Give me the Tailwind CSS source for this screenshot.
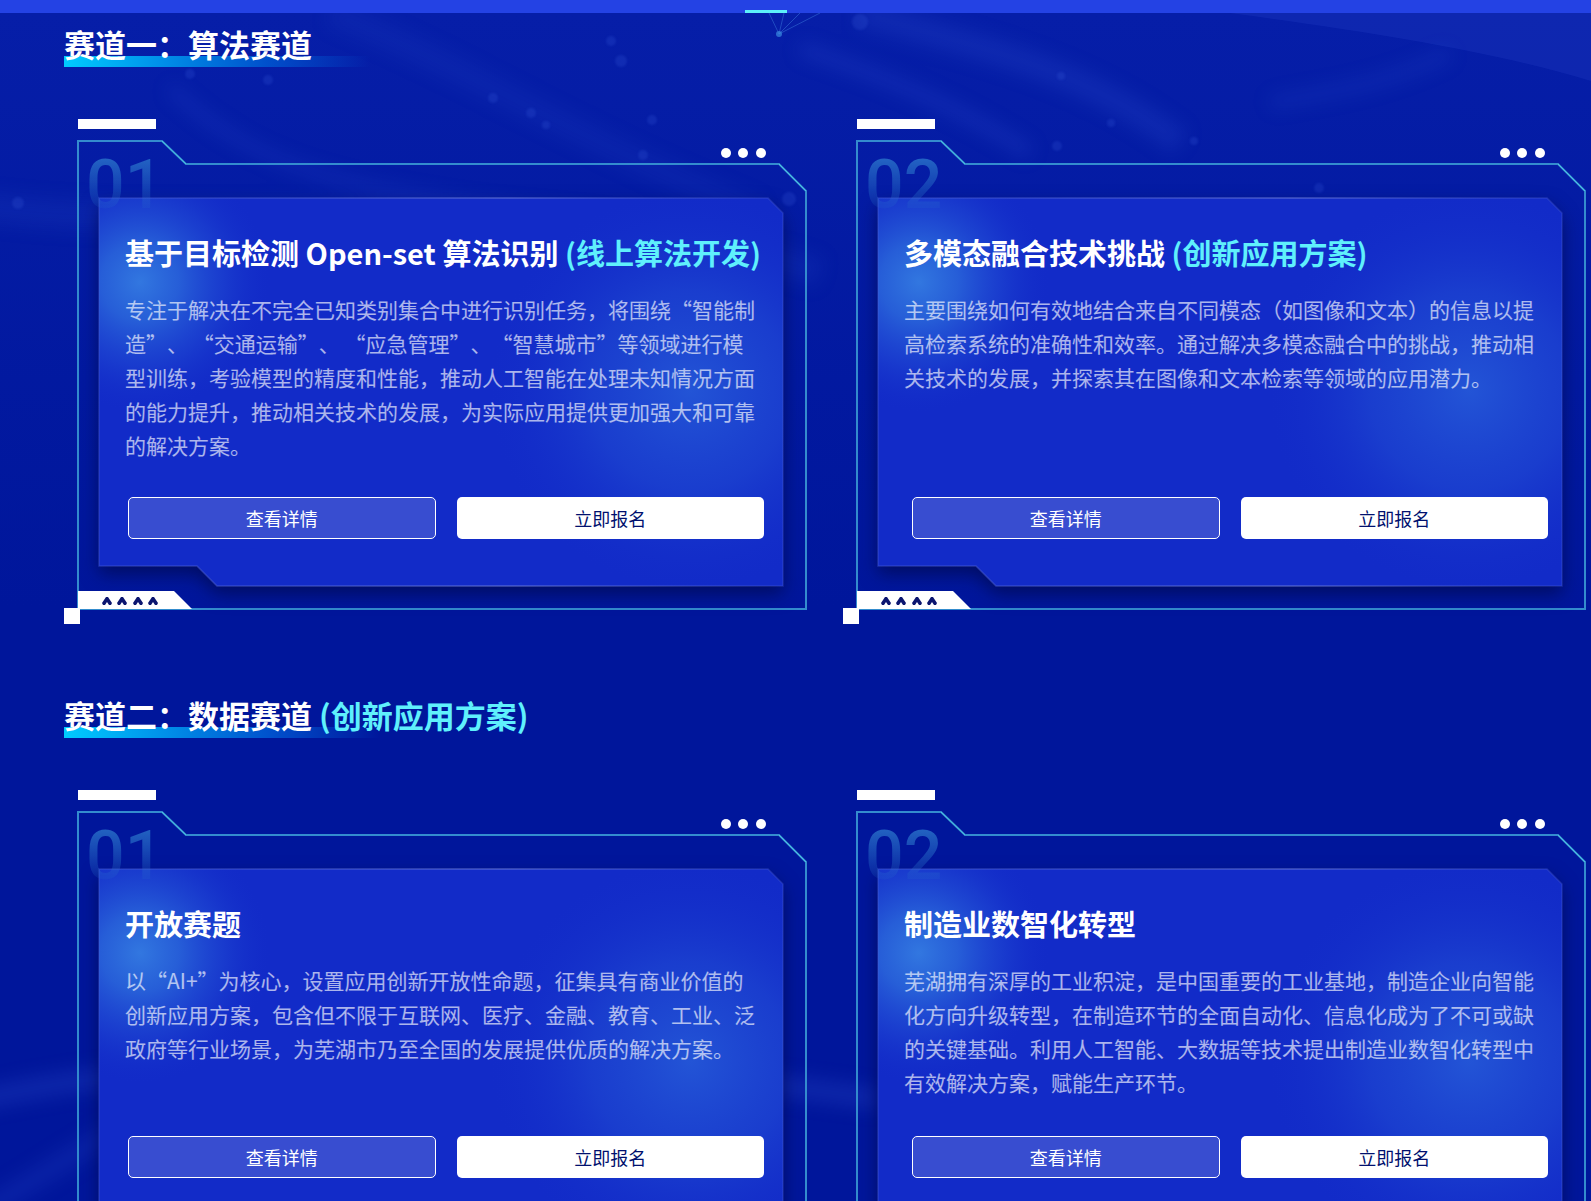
<!DOCTYPE html>
<html lang="zh-CN">
<head>
    <meta charset="UTF-8">
    <meta name="viewport" content="width=device-width, initial-scale=1.0">
    <title>赛道介绍</title>
    <script src="https://cdn.jsdelivr.net/npm/@tailwindcss/browser@4"></script>
</head>
<body class="bg-[#00169b] font-['Noto_Sans_CJK_SC',sans-serif] text-white [text-spacing-trim:space-all]">
    <!-- shared card artwork -->
    <svg class="absolute h-0 w-0" aria-hidden="true">
        <defs>
            <radialGradient id="glowLeft" gradientUnits="userSpaceOnUse" cx="76" cy="164" r="130">
                <stop offset="0" stop-color="#3a8ae6" stop-opacity=".8" />
                <stop offset=".3" stop-color="#3480e2" stop-opacity=".6" />
                <stop offset=".65" stop-color="#2a62dc" stop-opacity=".28" />
                <stop offset="1" stop-color="#1530cc" stop-opacity="0" />
            </radialGradient>
            <radialGradient id="glowRight" gradientUnits="userSpaceOnUse" cx="626" cy="272" r="200">
                <stop offset="0" stop-color="#2a66dc" stop-opacity=".7" />
                <stop offset=".5" stop-color="#2456d6" stop-opacity=".42" />
                <stop offset="1" stop-color="#1530cc" stop-opacity="0" />
            </radialGradient>
            <linearGradient id="edge" x1="0" y1="0" x2="1" y2="0">
                <stop offset="0" stop-color="#4a5fd8" stop-opacity=".4" />
                <stop offset=".6" stop-color="#7080dc" stop-opacity=".6" />
                <stop offset="1" stop-color="#5064d8" stop-opacity=".3" />
            </linearGradient>
            <filter id="panelShadow" x="-10%" y="-10%" width="120%" height="125%" color-interpolation-filters="sRGB">
                <feDropShadow dx="0" dy="8" stdDeviation="9" flood-color="#000a50" flood-opacity=".75" />
            </filter>
            <filter id="soft" x="-20%" y="-20%" width="140%" height="140%" color-interpolation-filters="sRGB"><feGaussianBlur stdDeviation="9" /></filter>
            <filter id="dotSoft" color-interpolation-filters="sRGB"><feGaussianBlur stdDeviation="1" /></filter>
            <clipPath id="panelClip"><path d="M35 80H704L719 95V468H153L133 448H35Z" /></clipPath>
        </defs>
        <symbol id="cardFrame" viewBox="0 0 742 506" preserveAspectRatio="none" overflow="visible">
            <rect x="14" y="1" width="78" height="10" fill="#fff" />
            <path d="M14 23H98L122 46H715L742 73V491H14Z" fill="none" stroke="#348cce" stroke-width="2" />
            <path d="M98 23L122 46M715 46L742 73" stroke="#4cc4e4" stroke-width="1" />
            <circle cx="662" cy="35" r="5" fill="#fff" />
            <circle cx="679" cy="35" r="5" fill="#fff" />
            <circle cx="697" cy="35" r="5" fill="#fff" />
            <path d="M35 80H704L719 95V468H153L133 448H35Z" fill="#122bc8" filter="url(#panelShadow)" />
            <g clip-path="url(#panelClip)">
                <rect x="35" y="80" width="684" height="388" fill="url(#glowLeft)" />
                <rect x="35" y="80" width="684" height="388" fill="url(#glowRight)" />
            </g>
            <path d="M35 80H704L719 95V468H153L133 448H35Z" fill="none" stroke="url(#edge)" stroke-width="1.5" />
            <path d="M14 473H110L128 491H14Z" fill="#fff" />
            <g fill="#0c1670">
                <path id="chevron" d="M38 485L42 479H44L48 485L47 487H45L43 484L41 487H39Z" />
                <use href="#chevron" x="15" />
                <use href="#chevron" x="31" />
                <use href="#chevron" x="46" />
            </g>
            <rect x="0" y="490" width="16" height="16" fill="#fff" />
        </symbol>
    </svg>

    <header class="h-[13px] bg-[#2442e4] pt-[10px]">
        <div class="ml-[46.8%] h-[3px] w-[42px] bg-[#5cf0fa]"></div>
    </header>

    <main class="relative h-[1188px] overflow-hidden bg-linear-to-b from-[#061ea8] to-[#00169b] to-50% pr-[6px] pl-16">
        <svg class="absolute inset-0 h-full w-full" viewBox="0 0 1591 1188" preserveAspectRatio="none" aria-hidden="true">
            <g fill="none" stroke="#3a60e0" filter="url(#soft)">
                <path d="M170 75C260 160 350 180 620 210" stroke-width="10" stroke-opacity=".2" />
                <path d="M330 0C480 60 560 120 760 200" stroke-width="26" stroke-opacity=".1" />
                <path d="M860 0C1000 40 1090 60 1180 130" stroke-width="26" stroke-opacity=".18" />
                <path d="M800 35C900 70 960 95 1030 140" stroke-width="14" stroke-opacity=".2" />
                <path d="M1270 90C1320 80 1380 75 1450 40" stroke-width="14" stroke-opacity=".14" />
                <path d="M-40 190C200 230 500 160 820 260" stroke-width="30" stroke-opacity=".12" />
                <path d="M-40 1090C60 1070 100 1060 200 1064" stroke-width="22" stroke-opacity=".22" />
                <path d="M-20 1200C30 1170 60 1150 110 1120" stroke-width="22" stroke-opacity=".16" />
                <path d="M760 1070L880 1086" stroke-width="22" stroke-opacity=".22" />
            </g>
            <path d="M1230 0C1380 20 1500 40 1591 68V0Z" fill="#3a54d8" fill-opacity=".18" />
            <g fill="#3a60e0" fill-opacity=".22" filter="url(#dotSoft)">
                <circle cx="860" cy="9" r="8" />
                <circle cx="611" cy="28" r="5" />
                <circle cx="621" cy="48" r="6" />
                <circle cx="493" cy="85" r="5" />
                <circle cx="531" cy="100" r="5" />
                <circle cx="546" cy="112" r="4" />
                <circle cx="652" cy="107" r="5" />
                <circle cx="643" cy="142" r="5" />
                <circle cx="268" cy="67" r="5" />
                <circle cx="190" cy="61" r="5" />
                <circle cx="1061" cy="63" r="4" />
                <circle cx="1057" cy="133" r="5" />
                <circle cx="1111" cy="110" r="4" />
                <circle cx="1194" cy="128" r="4" />
                <circle cx="1319" cy="175" r="5" />
                <circle cx="789" cy="186" r="7" />
                <circle cx="18" cy="190" r="6" />
            </g>
            <path d="M769 0L779 21L784 0M779 21L800 0M779 21L820 0" fill="none" stroke="#3a78dc" stroke-opacity=".5" />
            <circle cx="779" cy="21" r="3" fill="#3a8ae0" fill-opacity=".7" />
        </svg>

        <section class="relative pt-3 pb-[60px]">
            <h2 class="flex h-[42px] items-center bg-[linear-gradient(90deg,#00ccff,#008ee8_33%,#0050cc_66%,transparent)] bg-[length:306px_11px] bg-left-bottom bg-no-repeat pb-1 text-[31px] font-bold">赛道一：算法赛道</h2>
            <div class="mt-[51px] grid grid-cols-2 gap-[37px]">
                <article class="relative flex h-[506px] flex-col pt-[114px] pb-[85px]">
                    <svg class="absolute inset-0 h-full w-full overflow-visible" aria-hidden="true"><use href="#cardFrame" /></svg>
                    <div class="absolute top-5 left-[22px] bg-linear-to-b from-[#2c78cc]/80 from-20% to-[#2c78cc]/0 to-85% bg-clip-text font-['Roboto',sans-serif] text-[68px] leading-[94px] font-medium text-transparent" aria-hidden="true">01</div>
                    <h3 class="relative pl-[61px] text-[29px] leading-10 font-bold whitespace-nowrap">基于目标检测 Open-set 算法识别 <span class="text-[#5ff0fc]">(线上算法开发)</span></h3>
                    <p class="relative mt-5 pl-[61px] text-[21px] leading-[34px] whitespace-nowrap text-white/65">专注于解决在不完全已知类别集合中进行识别任务，将围绕“智能制<br>造”、 “交通运输”、 “应急管理”、“智慧城市”等领域进行模<br>型训练，考验模型的精度和性能，推动人工智能在处理未知情况方面<br>的能力提升，推动相关技术的发展，为实际应用提供更加强大和可靠<br>的解决方案。</p>
                    <div class="relative mt-auto grid grid-cols-2 gap-[21px] pr-[42px] pl-16">
                        <button type="button" class="h-[42px] rounded-[5px] border border-white bg-white/16 text-lg leading-none">查看详情</button>
                        <button type="button" class="h-[42px] rounded-[5px] bg-white text-lg leading-none text-[#00106e]">立即报名</button>
                    </div>
                </article>
                <article class="relative flex h-[506px] flex-col pt-[114px] pb-[85px]">
                    <svg class="absolute inset-0 h-full w-full overflow-visible" aria-hidden="true"><use href="#cardFrame" /></svg>
                    <div class="absolute top-5 left-[22px] bg-linear-to-b from-[#2c78cc]/80 from-20% to-[#2c78cc]/0 to-85% bg-clip-text font-['Roboto',sans-serif] text-[68px] leading-[94px] font-medium text-transparent" aria-hidden="true">02</div>
                    <h3 class="relative pl-[61px] text-[29px] leading-10 font-bold whitespace-nowrap">多模态融合技术挑战 <span class="text-[#5ff0fc]">(创新应用方案)</span></h3>
                    <p class="relative mt-5 pl-[61px] text-[21px] leading-[34px] whitespace-nowrap text-white/65">主要围绕如何有效地结合来自不同模态（如图像和文本）的信息以提<br>高检索系统的准确性和效率。通过解决多模态融合中的挑战，推动相<br>关技术的发展，并探索其在图像和文本检索等领域的应用潜力。</p>
                    <div class="relative mt-auto grid grid-cols-2 gap-[21px] pr-[37px] pl-[69px]">
                        <button type="button" class="h-[42px] rounded-[5px] border border-white bg-white/16 text-lg leading-none">查看详情</button>
                        <button type="button" class="h-[42px] rounded-[5px] bg-white text-lg leading-none text-[#00106e]">立即报名</button>
                    </div>
                </article>
            </div>
        </section>

        <section class="relative pt-3 pb-[60px]">
            <h2 class="flex h-[42px] items-center bg-[linear-gradient(90deg,#00ccff,#008ee8_33%,#0050cc_66%,transparent)] bg-[length:316px_11px] bg-left-bottom bg-no-repeat pb-1 text-[31px] font-bold whitespace-pre">赛道二：数据赛道 <span class="text-[#5ff0fc]">(创新应用方案)</span></h2>
            <div class="mt-[51px] grid grid-cols-2 gap-[37px]">
                <article class="relative flex h-[506px] flex-col pt-[114px] pb-[117px]">
                    <svg class="absolute inset-0 h-full w-full overflow-visible" aria-hidden="true"><use href="#cardFrame" /></svg>
                    <div class="absolute top-5 left-[22px] bg-linear-to-b from-[#2c78cc]/80 from-20% to-[#2c78cc]/0 to-85% bg-clip-text font-['Roboto',sans-serif] text-[68px] leading-[94px] font-medium text-transparent" aria-hidden="true">01</div>
                    <h3 class="relative pl-[61px] text-[29px] leading-10 font-bold whitespace-nowrap">开放赛题</h3>
                    <p class="relative mt-5 pl-[61px] text-[21px] leading-[34px] whitespace-nowrap text-white/65">以“AI+”为核心，设置应用创新开放性命题，征集具有商业价值的<br>创新应用方案，包含但不限于互联网、医疗、金融、教育、工业、泛<br>政府等行业场景，为芜湖市乃至全国的发展提供优质的解决方案。</p>
                    <div class="relative mt-auto grid grid-cols-2 gap-[21px] pr-[42px] pl-16">
                        <button type="button" class="h-[42px] rounded-[5px] border border-white bg-white/16 text-lg leading-none">查看详情</button>
                        <button type="button" class="h-[42px] rounded-[5px] bg-white text-lg leading-none text-[#00106e]">立即报名</button>
                    </div>
                </article>
                <article class="relative flex h-[506px] flex-col pt-[114px] pb-[117px]">
                    <svg class="absolute inset-0 h-full w-full overflow-visible" aria-hidden="true"><use href="#cardFrame" /></svg>
                    <div class="absolute top-5 left-[22px] bg-linear-to-b from-[#2c78cc]/80 from-20% to-[#2c78cc]/0 to-85% bg-clip-text font-['Roboto',sans-serif] text-[68px] leading-[94px] font-medium text-transparent" aria-hidden="true">02</div>
                    <h3 class="relative pl-[61px] text-[29px] leading-10 font-bold whitespace-nowrap">制造业数智化转型</h3>
                    <p class="relative mt-5 pl-[61px] text-[21px] leading-[34px] whitespace-nowrap text-white/65">芜湖拥有深厚的工业积淀，是中国重要的工业基地，制造企业向智能<br>化方向升级转型，在制造环节的全面自动化、信息化成为了不可或缺<br>的关键基础。利用人工智能、大数据等技术提出制造业数智化转型中<br>有效解决方案，赋能生产环节。</p>
                    <div class="relative mt-auto grid grid-cols-2 gap-[21px] pr-[37px] pl-[69px]">
                        <button type="button" class="h-[42px] rounded-[5px] border border-white bg-white/16 text-lg leading-none">查看详情</button>
                        <button type="button" class="h-[42px] rounded-[5px] bg-white text-lg leading-none text-[#00106e]">立即报名</button>
                    </div>
                </article>
            </div>
        </section>
    </main>
</body>
</html>
